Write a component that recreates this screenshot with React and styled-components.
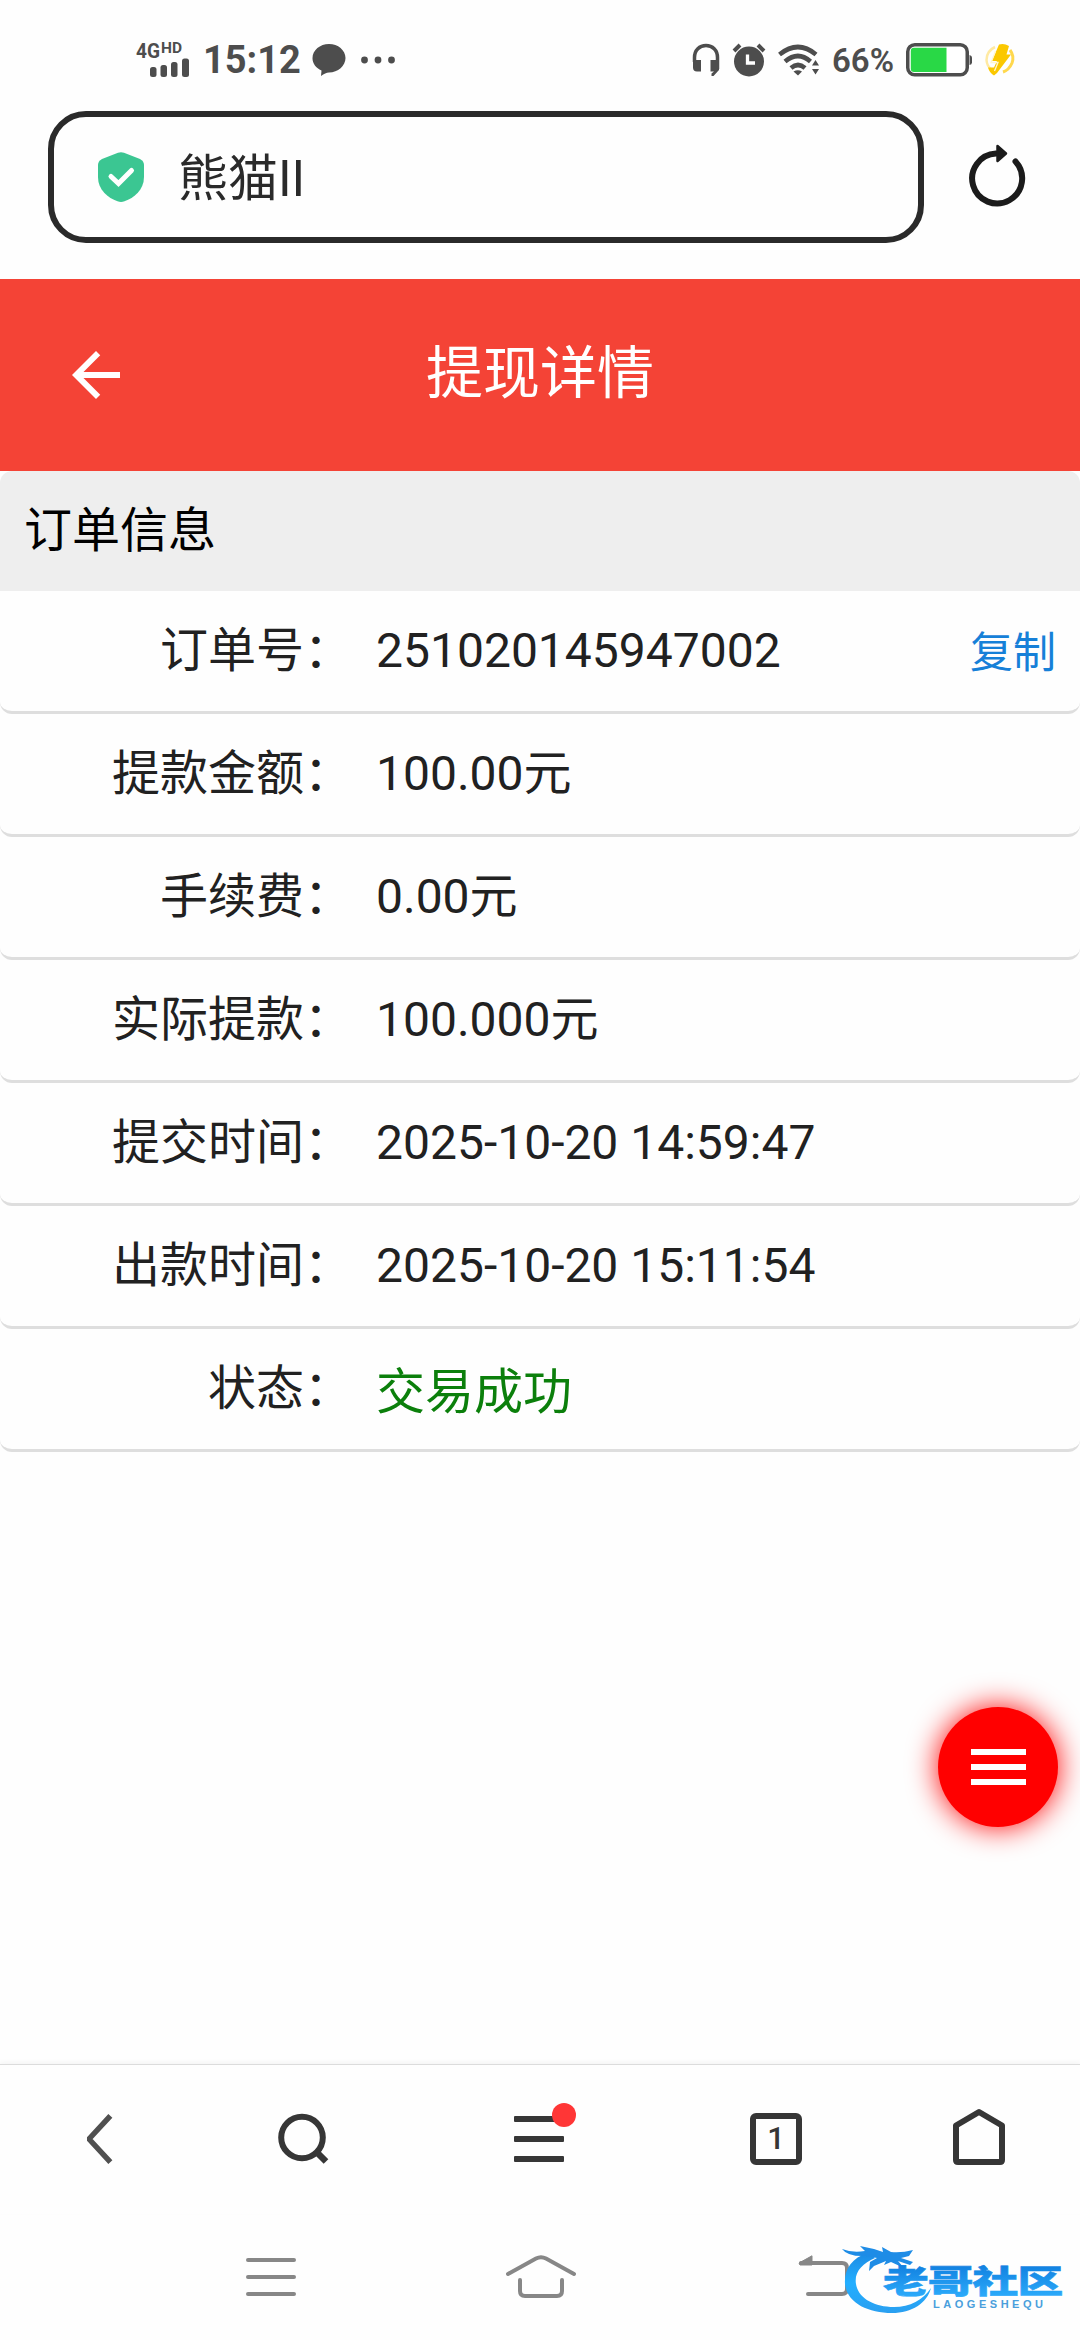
import React from 'react';
import styled, { createGlobalStyle } from 'styled-components';

const GlobalStyle = createGlobalStyle`
  * {
    box-sizing: border-box;
  }

  body {
    margin: 0;
    background: #fff;
    font-family: Roboto, "Noto Sans CJK SC", sans-serif;
  }

  svg {
    display: block;
    flex: none;
    overflow: visible;
  }
`;

const Screen = styled.div`
  position: relative;
  display: flex;
  flex-direction: column;
  width: 1080px;
  height: 2340px;
  overflow: hidden;
  background: #fefefe;
`;

const StatusBar = styled.div`
  display: flex;
  justify-content: space-between;
  align-items: center;
  height: 111px;
  padding: 9px 64px 0 134px;
  color: #4d4d4d;
`;

const StatusGroup = styled.div`
  display: flex;
  align-items: center;
  gap: ${({ $gap }) => $gap}px;
`;

const StatusText = styled.span`
  padding-top: ${({ $drop }) => $drop || 0}px;
  font-size: ${({ $size }) => $size}px;
  font-weight: ${({ $weight }) => $weight || 500};
  line-height: 44px;
`;

const AddressRow = styled.div`
  display: flex;
  align-items: center;
  gap: 42px;
  height: 168px;
  padding: 0 0 36px 48px;
`;

const AddressBox = styled.div`
  display: flex;
  align-items: center;
  width: 876px;
  height: 132px;
  padding-left: 44px;
  border: 6px solid #2a2a2a;
  border-radius: 38px;
`;

const SiteName = styled.span`
  margin-left: 34px;
  padding-top: 4px;
  font-size: 50px;
  line-height: 60px;
  color: #2a2a2a;
`;

const Header = styled.header`
  display: grid;
  grid-template-columns: 132px 1fr 132px;
  align-items: center;
  height: 192px;
  padding: 0;
  background: #f44336;
  color: #fff;
`;

const BackButton = styled.div`
  padding-left: 60px;
`;

const Title = styled.h1`
  margin: 0;
  padding-bottom: 3px;
  font-size: 57px;
  font-weight: 400;
  line-height: 72px;
  text-align: center;
`;

const SectionTitle = styled.div`
  display: flex;
  align-items: center;
  height: 120px;
  padding: 0 24px;
  border-radius: 12px 12px 0 0;
  background: #eee;
  font-size: 48px;
  line-height: 60px;
  color: #000;
`;

const Row = styled.div`
  display: flex;
  align-items: center;
  height: 123px;
  padding-right: 24px;
  border-bottom: 3px solid #dedede;
  border-radius: 12px;
  font-size: 48px;
  line-height: 60px;
  color: #212121;
`;

const Label = styled.div`
  width: 352px;
  padding-bottom: 1px;
  text-align: right;
`;

const Value = styled.div`
  flex: 1;
  margin-left: 24px;
`;

const Success = styled.span`
  display: block;
  padding-top: 7px;
  font-size: 49px;
  color: #0b7f0b;
`;

const CopyLink = styled.span`
  padding-top: 4px;
  font-size: 43px;
  color: #1680d8;
`;

const Fab = styled.div`
  position: absolute;
  top: 1707px;
  left: 938px;
  display: flex;
  flex-direction: column;
  justify-content: center;
  align-items: center;
  gap: 9px;
  width: 120px;
  height: 120px;
  border-radius: 50%;
  background: #f00;
  box-shadow: 0 0 30px #f00;
`;

const FabLine = styled.span`
  width: 55px;
  height: 6px;
  background: #fff;
`;

const Toolbar = styled.nav`
  display: grid;
  grid-template-columns: 198px 209px 264px 210px 196px;
  align-items: center;
  justify-items: center;
  height: 150px;
  margin-top: auto;
  padding-bottom: 1px;
  border-top: 1px solid #dcdcdc;
  box-shadow: 0 -2px 5px rgba(0, 0, 0, 0.04);
`;

const MenuButton = styled.div`
  position: relative;
`;

const Dot = styled.span`
  position: absolute;
  top: -10px;
  right: -12px;
  width: 24px;
  height: 24px;
  border-radius: 50%;
  background: #ff3636;
`;

const TabCount = styled.div`
  display: flex;
  align-items: center;
  justify-content: center;
  width: 52px;
  height: 52px;
  border: 6px solid #363636;
  border-radius: 6px;
  font-size: 31px;
  font-weight: 500;
  line-height: 40px;
  color: #363636;
`;

const SystemNav = styled.div`
  display: grid;
  grid-template-columns: repeat(3, 270px);
  align-items: center;
  justify-items: center;
  height: 126px;
  padding-left: 136px;
`;

const Watermark = styled.div`
  position: absolute;
  top: 2240px;
  left: 838px;
`;

const Signal = () => (
  <svg width="58" height="36" viewBox="0 0 58 36" fill="#4d4d4d">
    <text x="2" y="15.500" fontFamily="Roboto" fontSize="20" fontWeight="700" textLength="24" lengthAdjust="spacingAndGlyphs">4G</text>
    <text x="27" y="11" fontFamily="Roboto" fontSize="14" fontWeight="700" textLength="21" lengthAdjust="spacingAndGlyphs">HD</text>
    <rect x="16" y="25" width="6.500" height="10" rx="2.500" />
    <rect x="26.500" y="23" width="6.500" height="12" rx="2.500" />
    <rect x="37" y="20" width="6.500" height="15" rx="2.500" />
    <rect x="48" y="16.500" width="7" height="18.500" rx="2.500" />
  </svg>
);

const Bubble = () => (
  <svg width="34" height="34" viewBox="0 0 34 34" fill="#4d4d4d">
    <path d="M17 1C26 1 33.500 7.200 33.500 15S26 29.500 17 29.500C14.500 29.500 12 31 9 33L9.500 27.500C4 25 .5 20.500 .5 15.200C.5 7.200 8 1 17 1Z" />
  </svg>
);

const Dots = () => (
  <svg width="40" height="8" viewBox="0 0 40 8" fill="#4d4d4d">
    <circle cx="7.500" cy="4" r="3.400" />
    <circle cx="21" cy="4" r="3.400" />
    <circle cx="34.500" cy="4" r="3.400" />
  </svg>
);

const Headphones = () => (
  <svg width="28" height="36" viewBox="0 0 28 36">
    <path d="M2.500 20V15.500C2.500 8 7.500 3.500 14 3.500S25.500 8 25.500 15.500V27" fill="none" stroke="#4d4d4d" strokeWidth="3.500" />
    <path d="M1 18H9V29.500H5Q1 29.500 1 25.500ZM18.500 18H27V28L21.500 34H19.500V31.500L22 29.500H18.500Z" fill="#4d4d4d" />
  </svg>
);

const Alarm = () => (
  <svg width="34" height="34" viewBox="0 0 34 34">
    <circle cx="17" cy="18.500" r="15" fill="#4d4d4d" />
    <path d="M2 8L8 2M26 2L32 8" stroke="#4d4d4d" strokeWidth="4" />
    <path d="M15.500 11.500V20H23" fill="none" stroke="#fff" strokeWidth="3.300" />
  </svg>
);

const Wifi = () => (
  <svg width="42" height="34" viewBox="0 0 42 34">
    <g fill="none" stroke="#4d4d4d" strokeWidth="4.600">
      <path d="M1.500 11.500Q20 -3.500 38 11.500" />
      <path d="M7 18.500Q20 7.500 32.500 18.500" />
      <path d="M13 25Q20 19 27 25" />
    </g>
    <path d="M15.500 28.500Q20 26 24 28.500L20 32.500ZM37.500 17L41 22.500H34ZM34 26H41L37.500 31.500Z" fill="#4d4d4d" />
  </svg>
);

const Battery = () => (
  <svg width="66" height="34" viewBox="0 0 66 34">
    <rect x="1.750" y="1.750" width="59.500" height="30" rx="7" fill="#fff" stroke="#4d4d4d" strokeWidth="3.500" />
    <path d="M8 4.800H40.500V29H8Q4.800 29 4.800 26V8Q4.800 4.800 8 4.800Z" fill="#29d846" />
    <path d="M63.500 12Q66 12.500 66 14.500V19.500Q66 21.500 63.500 22Z" fill="#4d4d4d" />
  </svg>
);

const Bolt = () => (
  <svg width="32" height="36" viewBox="0 0 32 36">
    <path d="M11 5Q2.500 9 2.500 18Q3 24 7 27" fill="none" stroke="#ffeaa3" strokeWidth="2.500" />
    <path d="M26 8Q30.500 14 28 21Q25 28 19 30" fill="none" stroke="#ffd84d" strokeWidth="3" />
    <path d="M15 2.500Q20 .8 25 4L22.500 12.500H27L13 31L10 33.500Q5.500 31 4 25.500H10L13 19H8Z" fill="#fbc800" />
    <path d="M11.500 9L7 20.500H14L10.500 29" fill="none" stroke="#fff6cf" strokeWidth="1.300" />
  </svg>
);

const Shield = () => (
  <svg width="46" height="50" viewBox="0 0 46 50">
    <path d="M20 .8Q23 -.3 26 .8L42 7Q46 9 46 13V25C46 38 36 46 26.500 49.300Q23 50.500 19.500 49.300C10 46 0 38 0 25V13Q0 9 4 7Z" fill="#3bc692" />
    <path d="M13 24.500L20.500 31.500L33.500 18.500" fill="none" stroke="#fff" strokeWidth="5" strokeLinecap="round" />
  </svg>
);

const Reload = () => (
  <svg width="60" height="68" viewBox="0 0 60 68">
    <path d="M30 10.500A25 25 0 1 0 49.500 18.500" fill="none" stroke="#1b1b1b" strokeWidth="6" strokeLinecap="round" />
    <path d="M31.500 3L40 10.500L31.500 18Z" fill="#1b1b1b" stroke="#1b1b1b" strokeWidth="2.500" strokeLinejoin="round" />
  </svg>
);

const ArrowBack = () => (
  <svg width="72" height="72" viewBox="0 0 24 24" fill="#fff">
    <path d="M20 11H7.830l5.590-5.590L12 4l-8 8 8 8 1.410-1.410L7.830 13H20v-2z" />
  </svg>
);

const Chevron = () => (
  <svg width="28" height="50" viewBox="0 0 28 50">
    <path d="M23.500 4L4 25L23.500 46" fill="none" stroke="#505050" strokeWidth="5.500" strokeLinecap="square" strokeLinejoin="bevel" />
  </svg>
);

const Search = () => (
  <svg width="52" height="52" viewBox="0 0 52 52" fill="none" stroke="#363636" strokeWidth="6">
    <circle cx="25" cy="24.500" r="20.800" />
    <path d="M39 38.500L49 48.500" strokeWidth="6.500" />
  </svg>
);

const Menu = () => (
  <svg width="50" height="52" viewBox="0 0 50 52" fill="#363636">
    <rect y="3" width="50" height="6" rx="1" />
    <rect y="23" width="50" height="6" rx="1" />
    <rect y="43" width="50" height="6" rx="1" />
  </svg>
);

const Home = () => (
  <svg width="52" height="60" viewBox="0 0 52 60">
    <path d="M3 16.500L26 3L49 16.500V51Q49 53 47 53H5Q3 53 3 51Z" fill="none" stroke="#363636" strokeWidth="6" strokeLinejoin="round" />
  </svg>
);

const NavLines = () => (
  <svg width="50" height="44" viewBox="0 0 50 44">
    <path d="M2 5H48M2 22H48M2 39H48" stroke="#878787" strokeWidth="4" strokeLinecap="round" />
  </svg>
);

const NavHome = () => (
  <svg width="70" height="44" viewBox="0 0 70 44" fill="none" stroke="#878787" strokeWidth="4" strokeLinecap="round">
    <path d="M2 19L30 3.500Q35 .8 40 3.500L68 19" />
    <path d="M14 25V36Q14 41 19 41H51Q56 41 56 36V25" />
  </svg>
);

const NavBack = () => (
  <svg width="80" height="44" viewBox="0 0 80 44">
    <path d="M30 8H71Q76 8 76 13V34Q76 39 71 39H37" fill="none" stroke="#878787" strokeWidth="4" strokeLinecap="round" />
    <path d="M28 8L41 .8V10H29Z" fill="#878787" stroke="#878787" strokeWidth="1" strokeLinejoin="round" />
  </svg>
);

// dragon ring with the community name beside it
const CommunityLogo = () => (
  <svg width="232" height="80" viewBox="0 0 232 80">
    <defs>
      <linearGradient id="ring" x1="0" y1="0" x2="0" y2="1">
        <stop offset="0" stopColor="#1c8be4" />
        <stop offset=".5" stopColor="#22aeff" />
        <stop offset="1" stopColor="#2a9ff0" />
      </linearGradient>
      <linearGradient id="name" x1="0" y1="0" x2="0" y2="1">
        <stop offset=".2" stopColor="#1180e0" />
        <stop offset="1" stopColor="#30b2ff" />
      </linearGradient>
    </defs>
    <path d="M30 13C13 18 6 30 7 44C9 63 30 73 54 73C74 73 89 63 93 48C85 60 72 67 56 67C36 67 20 58 18 44C16 32 24 24 37 18Z" fill="url(#ring)" />
    <path d="M4 9Q14 13 27 11L22 6L36 9L45 12L44 7L53 12Q64 13 75 10L71 16L63 18L75 22L72 25L60 21L66 28L53 22L46 25L48 21L36 26L31 31L32 22L39 18L28 16Q10 17 4 9Z" fill="#1e8ce6" />
    <g transform="translate(45 53) scale(1.430 1)">
      <text x="0" y="0" fontFamily="Noto Sans CJK SC" fontSize="32" fontWeight="900" textLength="126" lengthAdjust="spacing" fill="url(#name)" stroke="url(#name)" strokeWidth=".6">老哥社区</text>
    </g>
    <text x="95" y="67.500" fontFamily="Liberation Sans" fontSize="11" fontWeight="700" textLength="110" lengthAdjust="spacing" fill="#4a9fdc">LAOGESHEQU</text>
  </svg>
);

const rows = [
  { label: '订单号：', value: '251020145947002', copy: true },
  { label: '提款金额：', value: '100.00元' },
  { label: '手续费：', value: '0.00元' },
  { label: '实际提款：', value: '100.000元' },
  { label: '提交时间：', value: '2025-10-20 14:59:47' },
  { label: '出款时间：', value: '2025-10-20 15:11:54' },
  { label: '状态：', value: '交易成功', success: true },
];

const App = () => (
  <Screen lang="zh-CN">
    <GlobalStyle />
    <StatusBar>
      <StatusGroup $gap={11}>
        <Signal />
        <StatusText $size={38} $weight={700}>15:12</StatusText>
        <Bubble />
        <Dots />
      </StatusGroup>
      <StatusGroup $gap={12}>
        <Headphones />
        <Alarm />
        <Wifi />
        <StatusText $size={33} $drop={2} $weight={600}>66%</StatusText>
        <Battery />
        <Bolt />
      </StatusGroup>
    </StatusBar>

    <AddressRow>
      <AddressBox>
        <Shield />
        <SiteName>熊猫II</SiteName>
      </AddressBox>
      <Reload />
    </AddressRow>

    <Header>
      <BackButton>
        <ArrowBack />
      </BackButton>
      <Title>提现详情</Title>
    </Header>

    <SectionTitle>订单信息</SectionTitle>
    {rows.map(({ label, value, copy, success }) => (
      <Row key={label}>
        <Label>{label}</Label>
        <Value>{success ? <Success>{value}</Success> : value}</Value>
        {copy && <CopyLink>复制</CopyLink>}
      </Row>
    ))}

    <Fab>
      <FabLine />
      <FabLine />
      <FabLine />
    </Fab>

    <Toolbar>
      <Chevron />
      <Search />
      <MenuButton>
        <Menu />
        <Dot />
      </MenuButton>
      <TabCount>1</TabCount>
      <Home />
    </Toolbar>

    <SystemNav>
      <NavLines />
      <NavHome />
      <NavBack />
    </SystemNav>

    <Watermark>
      <CommunityLogo />
    </Watermark>
  </Screen>
);

export default App;
